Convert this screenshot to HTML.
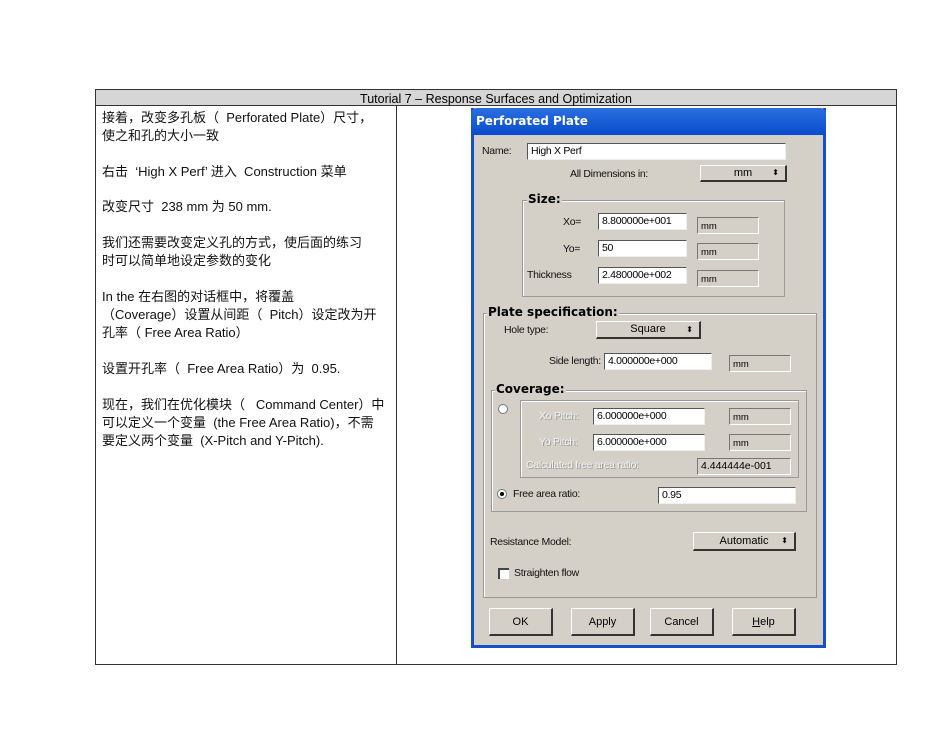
<!DOCTYPE html>
<html><head><meta charset="utf-8"><style>
body{margin:0;width:950px;height:734px;background:#fff;position:relative;overflow:hidden;font-family:"Liberation Sans","Noto Sans CJK SC",sans-serif;}
.a{position:absolute;white-space:nowrap}
.t{font-size:13px;color:#111;left:102px}
.d{font-family:"Liberation Sans",sans-serif;font-size:10.5px;color:#111;letter-spacing:-0.3px}
.in{position:absolute;background:#fff;border-top:1px solid #555;border-left:1px solid #555;border-right:1px solid #eee;border-bottom:1px solid #eee;box-sizing:border-box;font-size:10.5px;padding-left:3px;line-height:15px;font-family:"Liberation Sans",sans-serif;letter-spacing:-0.3px}
.ro{position:absolute;background:#d4d0c8;border-top:1px solid #777;border-left:1px solid #777;border-right:1px solid #fff;border-bottom:1px solid #fff;box-sizing:border-box;font-size:9.5px;padding-left:3px;padding-top:3px;font-family:"Liberation Sans",sans-serif}
.btn{position:absolute;background:#d4d0c8;border-top:1px solid #fff;border-left:1px solid #fff;border-right:2px solid #333;border-bottom:2px solid #333;box-sizing:border-box;font-size:11px;text-align:center;font-family:"Liberation Sans",sans-serif}
.grp{position:absolute;border:1px solid #999;box-shadow:1px 1px 0 #fff inset;box-sizing:border-box}
.lg{position:absolute;background:#d4d0c8;font-weight:bold;font-size:12px;padding:0 1px;font-family:"DejaVu Sans",sans-serif}
.dis{color:#f4f4f4;text-shadow:1px 1px 0 #999}
</style></head><body>
<div class="a" style="left:95px;top:89px;width:802px;height:576px;border:1px solid #333;box-sizing:border-box"></div>
<div class="a" style="left:96px;top:90px;width:800px;height:15px;background:#d6d6d6;border-bottom:1px solid #333;font-size:12.5px;text-align:center;line-height:18px">Tutorial 7 – Response Surfaces and Optimization</div>
<div class="a" style="left:396px;top:105px;width:1px;height:560px;background:#333"></div>

<div class="a t" style="top:107px">接着，改变多孔板（&nbsp; Perforated Plate）尺寸，</div>
<div class="a t" style="top:125px">使之和孔的大小一致</div>
<div class="a t" style="top:161px">右击&nbsp; ‘High X Perf’ 进入&nbsp; Construction 菜单</div>
<div class="a t" style="top:196px">改变尺寸&nbsp; 238 mm 为 50 mm.</div>
<div class="a t" style="top:232px">我们还需要改变定义孔的方式，使后面的练习</div>
<div class="a t" style="top:250px">时可以简单地设定参数的变化</div>
<div class="a t" style="top:286px">In the 在右图的对话框中，将覆盖</div>
<div class="a t" style="top:304px">（Coverage）设置从间距（&nbsp; Pitch）设定改为开</div>
<div class="a t" style="top:322px">孔率（ Free Area Ratio）</div>
<div class="a t" style="top:358px">设置开孔率（&nbsp; Free Area Ratio）为&nbsp; 0.95.</div>
<div class="a t" style="top:394px">现在，我们在优化模块（&nbsp;&nbsp; Command Center）中</div>
<div class="a t" style="top:412px">可以定义一个变量&nbsp; (the Free Area Ratio)，不需</div>
<div class="a t" style="top:430px">要定义两个变量&nbsp; (X-Pitch and Y-Pitch).</div>

<!-- dialog -->
<div class="a" style="left:471px;top:108px;width:355px;height:540px;background:#d4d0c8;border:3px solid #1450c8;border-top:none;box-sizing:border-box"></div>
<div class="a" style="left:471px;top:108px;width:355px;height:27px;background:linear-gradient(#2a6fe0,#0a4ccc);border-radius:6px 6px 0 0;color:#fff;font-weight:bold;font-size:12px;line-height:27px;padding-left:5px;box-sizing:border-box;font-family:'DejaVu Sans',sans-serif">Perforated Plate</div>

<div class="a d" style="left:482px;top:145px">Name:</div>
<div class="in" style="left:527px;top:143px;width:259px;height:17px">High X Perf</div>
<div class="a d" style="left:570px;top:168px">All Dimensions in:</div>
<div class="btn" style="left:700px;top:165px;width:87px;height:17px;line-height:14px">mm <span style="position:absolute;right:6px;font-size:8px">⬍</span></div>

<div class="grp" style="left:522px;top:200px;width:263px;height:97px"></div>
<div class="lg" style="left:527px;top:192px">Size:</div>
<div class="a d" style="left:563px;top:216px">Xo=</div>
<div class="in" style="left:598px;top:213px;width:89px;height:17px">8.800000e+001</div>
<div class="ro" style="left:697px;top:217px;width:62px;height:17px">mm</div>
<div class="a d" style="left:563px;top:243px">Yo=</div>
<div class="in" style="left:598px;top:240px;width:89px;height:17px">50</div>
<div class="ro" style="left:697px;top:243px;width:62px;height:17px">mm</div>
<div class="a d" style="left:527px;top:269px">Thickness</div>
<div class="in" style="left:598px;top:267px;width:89px;height:17px">2.480000e+002</div>
<div class="ro" style="left:697px;top:270px;width:62px;height:17px">mm</div>

<div class="grp" style="left:483px;top:313px;width:334px;height:285px"></div>
<div class="lg" style="left:487px;top:305px">Plate specification:</div>
<div class="a d" style="left:504px;top:324px">Hole type:</div>
<div class="btn" style="left:596px;top:321px;width:105px;height:18px;line-height:15px">Square <span style="position:absolute;right:6px;font-size:8px">⬍</span></div>
<div class="a d" style="left:549px;top:355px">Side length:</div>
<div class="in" style="left:604px;top:353px;width:108px;height:17px">4.000000e+000</div>
<div class="ro" style="left:729px;top:355px;width:62px;height:17px">mm</div>

<div class="grp" style="left:491px;top:390px;width:316px;height:122px"></div>
<div class="lg" style="left:495px;top:382px">Coverage:</div>
<div class="a" style="left:498px;top:404px;width:10px;height:10px;border-radius:50%;background:#fff;border:1px solid #777;box-sizing:border-box"></div>
<div class="grp" style="left:520px;top:400px;width:279px;height:78px"></div>
<div class="a d dis" style="left:539px;top:410px">Xo Pitch:</div>
<div class="in" style="left:593px;top:408px;width:112px;height:17px">6.000000e+000</div>
<div class="ro" style="left:729px;top:408px;width:62px;height:17px">mm</div>
<div class="a d dis" style="left:539px;top:436px">Yo Pitch:</div>
<div class="in" style="left:593px;top:434px;width:112px;height:17px">6.000000e+000</div>
<div class="ro" style="left:729px;top:434px;width:62px;height:17px">mm</div>
<div class="a d dis" style="left:526px;top:459px">Calculated free area ratio:</div>
<div class="ro" style="left:697px;top:458px;width:94px;height:17px;padding-top:1px;font-size:10.5px">4.444444e-001</div>
<div class="a" style="left:497px;top:489px;width:10px;height:10px;border-radius:50%;background:#fff;border:1px solid #777;box-sizing:border-box"><div style="width:4px;height:4px;background:#000;border-radius:50%;margin:2px"></div></div>
<div class="a d" style="left:513px;top:488px">Free area ratio:</div>
<div class="in" style="left:658px;top:487px;width:138px;height:17px">0.95</div>

<div class="a d" style="left:490px;top:536px">Resistance Model:</div>
<div class="btn" style="left:693px;top:532px;width:103px;height:19px;line-height:16px">Automatic <span style="position:absolute;right:6px;font-size:8px">⬍</span></div>
<div class="a" style="left:498px;top:568px;width:11px;height:11px;background:#fff;border-top:2px solid #444;border-left:2px solid #444;box-sizing:border-box"></div>
<div class="a d" style="left:514px;top:567px">Straighten flow</div>

<div class="btn" style="left:489px;top:608px;width:64px;height:28px;line-height:26px">OK</div>
<div class="btn" style="left:571px;top:608px;width:64px;height:28px;line-height:26px">Apply</div>
<div class="btn" style="left:650px;top:608px;width:64px;height:28px;line-height:26px">Cancel</div>
<div class="btn" style="left:732px;top:608px;width:64px;height:28px;line-height:26px"><u>H</u>elp</div>
</body></html>
